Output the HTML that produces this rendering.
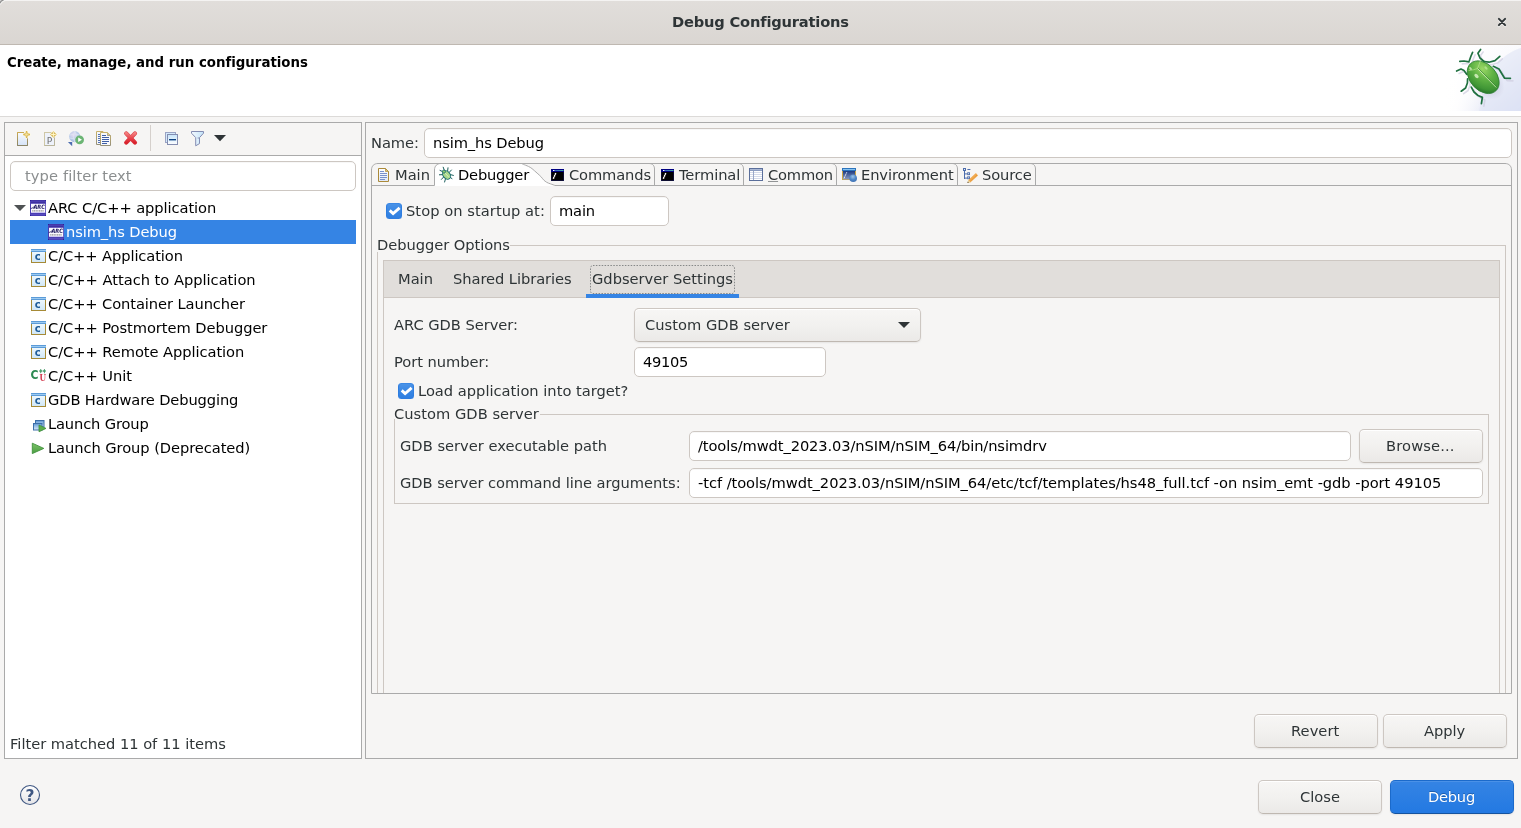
<!DOCTYPE html>
<html>
<head>
<meta charset="utf-8">
<title>Debug Configurations</title>
<style>
html,body{margin:0;padding:0}
body{width:1521px;height:828px;position:relative;overflow:hidden;background:#f6f5f4;
 font-family:"DejaVu Sans","Liberation Sans",sans-serif;font-size:14.67px;color:#2e3436;line-height:17px}
#root{position:absolute;left:0;top:0;width:1521px;height:828px;will-change:transform}
.a{position:absolute;white-space:nowrap}
.t{position:absolute;white-space:nowrap;line-height:17px;height:17px}
#titlebar{left:0;top:0;width:1521px;height:44px;border-bottom:1px solid #bfb8b1;
 background:linear-gradient(to bottom,#e1dedb 0%,#dad6d2 100%);box-shadow:inset 0 1px #f4f3f2}
#banner{left:0;top:45px;width:1521px;height:71px;background:#fff;border-bottom:1px solid #dcdad8}
.panel{position:absolute;border:1px solid #aaaaaa;box-sizing:border-box}
.entry{position:absolute;box-sizing:border-box;background:#fff;border:1px solid #cdc7c2;border-radius:5px;
 box-shadow:inset 0 1px rgba(0,0,0,0.03)}
.btn{position:absolute;box-sizing:border-box;border:1px solid #cdc7c2;border-bottom-color:#bfb8b1;border-radius:5px;
 background:linear-gradient(to bottom,#f7f6f5 0%,#f2f1ef 50%,#ebe9e7 100%);
 box-shadow:0 1px 2px rgba(0,0,0,0.07),inset 0 1px #fff}
.btn.blue{border-color:#1b6acb;border-bottom-color:#15539e;background:linear-gradient(to bottom,#3584e4,#2379e2);
 box-shadow:0 1px 2px rgba(0,0,0,0.07),inset 0 1px #4a91e7}
.row{position:absolute;left:10px;width:346px;height:24px}
.chk{position:absolute;width:16px;height:16px;box-sizing:border-box;border-radius:3.5px;
 background:linear-gradient(to bottom,#4b93e7 0%,#3886e4 55%,#2f7fe1 100%);border:1px solid #2e7de0;border-top-color:#3b88e5}
.grp{position:absolute;box-sizing:border-box;border:1px solid #cdc7c2}
.ic{position:absolute}
</style>
</head>
<body>
<div id="root">
<div class="a" id="titlebar"></div>
<svg class="ic" style="left:0;top:0" width="6" height="6" viewBox="0 0 6 6"><path d="M0 0 L4 0 L0 4 Z" fill="#d9d9d9"/><path d="M0 3.2 Q0.6 0.6 3.6 0" stroke="#8e8e8e" stroke-width="1.1" fill="none"/><path d="M0.4 4.6 Q1.4 1.6 4.8 0.8" stroke="#f3f2f1" stroke-width="0.9" fill="none"/></svg>
<div class="t" style="left:672px;top:13px;color:#2e3436;letter-spacing:-0.186px;font-weight:bold;">Debug Configurations</div>
<svg class="ic" style="left:1496px;top:16px" width="12" height="12" viewBox="0 0 12 12"><path d="M2.7 3.7 L9.3 10.3 M9.3 3.7 L2.7 10.3" stroke="#f1efee" stroke-width="2" fill="none" stroke-linecap="round"/><path d="M2.9 2.9 L9.1 9.1 M9.1 2.9 L2.9 9.1" stroke="#2e3436" stroke-width="2" fill="none" stroke-linecap="round"/></svg>
<div class="a" id="banner"></div>
<div class="t" style="left:7px;top:54px;color:#000;letter-spacing:-0.004px;font-weight:bold;font-size:13.33px;">Create, manage, and run configurations</div>
<svg class="ic" style="left:1446px;top:45px" width="75" height="66" viewBox="0 0 75 66">
<defs>
<linearGradient id="bb" x1="0.2" y1="0.15" x2="1" y2="1"><stop offset="0" stop-color="#ffffff"/><stop offset="0.4" stop-color="#fafafd"/><stop offset="0.72" stop-color="#e7eaf7"/><stop offset="1" stop-color="#d8ddf3"/></linearGradient><linearGradient id="bw" x1="0" y1="0" x2="1" y2="0"><stop offset="0" stop-color="#fff" stop-opacity="1"/><stop offset="0.12" stop-color="#fff" stop-opacity="0.9"/><stop offset="0.5" stop-color="#fff" stop-opacity="0"/></linearGradient>
<radialGradient id="bg2" cx="0.32" cy="0.3" r="0.75"><stop offset="0" stop-color="#9ad765"/><stop offset="0.45" stop-color="#5fb244"/><stop offset="0.85" stop-color="#3f9535"/><stop offset="1" stop-color="#2b7a2c"/></radialGradient>
<radialGradient id="bs" cx="0.5" cy="0.5" r="0.5"><stop offset="0" stop-color="#8a86a8" stop-opacity="0.45"/><stop offset="1" stop-color="#8a86a8" stop-opacity="0"/></radialGradient>
</defs>
<rect x="0" y="0" width="75" height="66" fill="url(#bb)"/>
<path d="M75 3 C54 9 38 30 33 66 L75 66 Z" fill="#dfe4f5" opacity="0.6"/><rect x="0" y="0" width="75" height="66" fill="url(#bw)"/>
<ellipse cx="40.2" cy="36.2" rx="21" ry="15" transform="rotate(45 40.2 36.2)" fill="url(#bs)"/>
<g fill="none" stroke="#cfcde0" stroke-width="1.6" stroke-linecap="round" stroke-linejoin="round" opacity="0.7" transform="translate(2.5 2.5)">
<path d="M23.4 15.5 L25.0 11.0 L26.6 7.3"/><path d="M23.0 16.8 L18.0 16.0 L13.8 16.4"/><path d="M38.0 16.5 L34.0 13.0 L31.9 8.2 L34.6 4.5"/><path d="M38.0 16.5 L43.0 17.2 L49.0 15.6 L53.8 11.4"/><path d="M47.3 21.3 L53.0 24.0 L56.0 29.0 L58.6 33.2 L64.4 33.4"/><path d="M20.7 29.3 L18.0 25.5 L15.0 24.0 L10.6 26.0"/><path d="M21.6 33.9 L21.4 38.0 L19.6 43.0 L15.2 46.2"/><path d="M25.3 42.1 L28.0 47.0 L32.0 50.5 L36.4 52.4 L35.4 58.6"/>
</g>
<g fill="none" stroke="#1f7040" stroke-width="1.7" stroke-linecap="round" stroke-linejoin="round">
<path d="M23.4 15.5 L25.0 11.0 L26.6 7.3"/><path d="M23.0 16.8 L18.0 16.0 L13.8 16.4"/><path d="M38.0 16.5 L34.0 13.0 L31.9 8.2 L34.6 4.5"/><path d="M38.0 16.5 L43.0 17.2 L49.0 15.6 L53.8 11.4"/><path d="M47.3 21.3 L53.0 24.0 L56.0 29.0 L58.6 33.2 L64.4 33.4"/><path d="M20.7 29.3 L18.0 25.5 L15.0 24.0 L10.6 26.0"/><path d="M21.6 33.9 L21.4 38.0 L19.6 43.0 L15.2 46.2"/><path d="M25.3 42.1 L28.0 47.0 L32.0 50.5 L36.4 52.4 L35.4 58.6"/>
</g>
<ellipse cx="37.2" cy="32.2" rx="18.6" ry="13.2" transform="rotate(47 37.2 32.2)" fill="url(#bg2)" stroke="#2e7f33" stroke-width="0.8"/>
<path d="M22.6 25.5 Q28.0 25.0 31.5 23.5 Q33.5 19.0 34.5 15.2" fill="none" stroke="#b5e08f" stroke-width="0.8" opacity="0.9"/>
<path d="M31.6 23.6 L50.2 42.4" stroke="#d4efb8" stroke-width="0.9"/>
<path d="M32.2 23.2 L50.8 42.0" stroke="#2f7f30" stroke-width="0.6"/>
<ellipse cx="30.5" cy="31.0" rx="2.6" ry="1.6" transform="rotate(45 30.5 31.0)" fill="#e8f8d4" opacity="0.75"/>
<ellipse cx="24.5" cy="23.5" rx="1.6" ry="1" transform="rotate(45 24.5 23.5)" fill="#e8f8d4" opacity="0.7"/>
<ellipse cx="40.0" cy="23.0" rx="2" ry="1.1" transform="rotate(45 40.0 23.0)" fill="#c9ecab" opacity="0.6"/>
</svg>
<div class="panel" style="left:4px;top:122px;width:358px;height:637px;background:#fff"></div>
<div class="a" style="left:5px;top:123px;width:356px;height:32px;background:#f6f5f4;border-bottom:1px solid #aaaaaa"></div>
<div class="a" style="left:150px;top:125px;width:1px;height:26px;background:#d5d0cc"></div>
<div class="entry" style="left:10px;top:161px;width:346px;height:30px"></div>
<div class="t" style="left:25px;top:167px;color:#8b8e8f;letter-spacing:0.099px;">type filter text</div>
<div class="row" style="top:220px;background:#3584e4"></div>
<div class="t" style="left:48px;top:199px;color:#000;letter-spacing:-0.081px;">ARC C/C++ application</div>
<div class="t" style="left:66px;top:223px;color:#fff;letter-spacing:-0.113px;">nsim_hs Debug</div>
<div class="t" style="left:48px;top:247px;color:#000;letter-spacing:-0.095px;">C/C++ Application</div>
<div class="t" style="left:48px;top:271px;color:#000;letter-spacing:-0.020px;">C/C++ Attach to Application</div>
<div class="t" style="left:48px;top:295px;color:#000;letter-spacing:-0.090px;">C/C++ Container Launcher</div>
<div class="t" style="left:48px;top:319px;color:#000;letter-spacing:-0.059px;">C/C++ Postmortem Debugger</div>
<div class="t" style="left:48px;top:343px;color:#000;letter-spacing:-0.063px;">C/C++ Remote Application</div>
<div class="t" style="left:48px;top:367px;color:#000;letter-spacing:-0.052px;">C/C++ Unit</div>
<div class="t" style="left:48px;top:391px;color:#000;letter-spacing:-0.121px;">GDB Hardware Debugging</div>
<div class="t" style="left:48px;top:415px;color:#000;letter-spacing:-0.145px;">Launch Group</div>
<div class="t" style="left:48px;top:439px;color:#000;letter-spacing:-0.067px;">Launch Group (Deprecated)</div>
<div class="t" style="left:10px;top:735px;color:#2e3436;letter-spacing:-0.023px;">Filter matched 11 of 11 items</div>
<div class="panel" style="left:365px;top:122px;width:1153px;height:637px"></div>
<div class="t" style="left:371px;top:134px;color:#2e3436;letter-spacing:-0.042px;">Name:</div>
<div class="entry" style="left:424px;top:128px;width:1088px;height:30px"></div>
<div class="t" style="left:433px;top:134px;color:#000;letter-spacing:-0.113px;">nsim_hs Debug</div>
<svg class="ic" style="left:371px;top:163px" width="1141" height="531" viewBox="0 0 1141 531">
<path d="M63.5 23 L63.5 7 C63.5 3 66 0.5 70 0.5 L150.5 0.5 C151.2 0.8 153.3 1.7 154.5 2.2 C155.7 2.7 156.5 2.9 157.6 3.5 C158.7 4.1 159.6 4.5 161.0 5.6 C162.4 6.7 164.6 8.8 166.1 10.1 C167.6 11.4 168.8 12.5 169.9 13.6 C171.0 14.7 171.6 15.9 172.6 16.9 C173.6 17.8 174.5 18.6 175.7 19.3 C176.9 20.0 178.2 20.4 179.6 20.9 C181.0 21.4 183.3 22.2 184.0 22.5 L184 23 Z" fill="#fff"/>
<path d="M0.5 530.5 L0.5 7 C0.5 3 3 0.5 7 0.5 L1134 0.5 C1138 0.5 1140.5 3 1140.5 7 L1140.5 530.5 Z" fill="none" stroke="#aaaaaa"/>
<path d="M0.5 22.5 L63.5 22.5 M184 22.5 L1140.5 22.5" fill="none" stroke="#aaaaaa"/>
<path d="M63.5 22.5 L63.5 7 C63.5 3 66 0.5 70 0.5 M150.5 0.5 C151.2 0.8 153.3 1.7 154.5 2.2 C155.7 2.7 156.5 2.9 157.6 3.5 C158.7 4.1 159.6 4.5 161.0 5.6 C162.4 6.7 164.6 8.8 166.1 10.1 C167.6 11.4 168.8 12.5 169.9 13.6 C171.0 14.7 171.6 15.9 172.6 16.9 C173.6 17.8 174.5 18.6 175.7 19.3 C176.9 20.0 178.2 20.4 179.6 20.9 C181.0 21.4 183.3 22.2 184.0 22.5" fill="none" stroke="#aaaaaa"/>
<g fill="none" stroke="#aaaaaa">
<path d="M283.5 22.5 L283.5 6 C283.5 3 282 0.5 278 0.5"/>
<path d="M372.5 22.5 L372.5 6 C372.5 3 371 0.5 367 0.5"/>
<path d="M465.5 22.5 L465.5 6 C465.5 3 464 0.5 460 0.5"/>
<path d="M586.5 22.5 L586.5 6 C586.5 3 585 0.5 581 0.5"/>
<path d="M664.5 22.5 L664.5 6 C664.5 3 663 0.5 659 0.5"/>
</g>
</svg>
<div class="t" style="left:395px;top:166px;color:#2e3436;letter-spacing:-0.003px;">Main</div>
<div class="t" style="left:458px;top:166px;color:#000;letter-spacing:-0.199px;">Debugger</div>
<div class="t" style="left:569px;top:166px;color:#2e3436;letter-spacing:-0.128px;">Commands</div>
<div class="t" style="left:679px;top:166px;color:#2e3436;letter-spacing:-0.092px;">Terminal</div>
<div class="t" style="left:768px;top:166px;color:#2e3436;letter-spacing:-0.176px;"><u style="text-decoration-thickness:1px;text-underline-offset:1px;text-decoration-color:rgba(46,52,54,0.5)">C</u>ommon</div>
<div class="t" style="left:861px;top:166px;color:#2e3436;letter-spacing:-0.088px;">Environment</div>
<div class="t" style="left:982px;top:166px;color:#2e3436;letter-spacing:-0.116px;">Source</div>
<div class="chk" style="left:386px;top:203px"></div>
<div class="t" style="left:406px;top:202px;color:#2e3436;letter-spacing:0.050px;">Stop on startup at:</div>
<div class="entry" style="left:550px;top:196px;width:119px;height:30px"></div>
<div class="t" style="left:559px;top:202px;color:#000;letter-spacing:-0.161px;">main</div>
<div class="a" style="left:372px;top:186px;width:1139px;height:507px;overflow:hidden">
 <div class="a" style="left:5px;top:59px;width:1129px;height:520px;border:1px solid #cdc7c2;box-sizing:border-box"></div>
 <div class="a" style="left:5px;top:55px;width:133px;height:11px;background:#f6f5f4"></div>
 <div class="a" style="left:11px;top:74px;width:1117px;height:500px;border:1px solid #cdc7c2;box-sizing:border-box"></div>
 <div class="a" style="left:11px;top:74px;width:1117px;height:38px;border:1px solid #cdc7c2;box-sizing:border-box;background:#e1dedb"></div>
 <div class="a" style="left:214px;top:108px;width:153px;height:4px;background:#3584e4"></div>
 <svg class="ic" style="left:218px;top:79px" width="145" height="29" viewBox="0 0 145 29"><rect x="0.5" y="0.5" width="144" height="28" rx="2.5" fill="none" stroke="#4a4e50" stroke-opacity="0.6" stroke-width="1" stroke-dasharray="1.5 1.4"/></svg>
</div>
<div class="t" style="left:377px;top:236px;color:#2e3436;letter-spacing:-0.053px;">Debugger Options</div>
<div class="t" style="left:398px;top:270px;color:#2e3436;letter-spacing:-0.003px;">Main</div>
<div class="t" style="left:453px;top:270px;color:#2e3436;letter-spacing:-0.060px;">Shared Libraries</div>
<div class="t" style="left:592px;top:270px;color:#2e3436;letter-spacing:-0.013px;">Gdbserver Settings</div>
<div class="t" style="left:394px;top:316px;color:#2e3436;letter-spacing:-0.037px;">ARC GDB Server:</div>
<div class="btn" style="left:634px;top:308px;width:287px;height:34px"></div>
<div class="t" style="left:645px;top:316px;color:#2e3436;letter-spacing:0.020px;">Custom GDB server</div>
<svg class="ic" style="left:897px;top:321px" width="14" height="8" viewBox="0 0 14 8"><path d="M1 1 L13 1 L7 7 Z" fill="#2e3436"/></svg>
<div class="t" style="left:394px;top:353px;color:#2e3436;letter-spacing:-0.037px;">Port number:</div>
<div class="entry" style="left:634px;top:347px;width:192px;height:30px"></div>
<div class="t" style="left:643px;top:353px;color:#000;letter-spacing:-0.331px;">49105</div>
<div class="chk" style="left:398px;top:383px"></div>
<div class="t" style="left:418px;top:382px;color:#2e3436;letter-spacing:-0.002px;">Load application into target?</div>
<div class="grp" style="left:394px;top:414px;width:1095px;height:90px"></div>
<div class="a" style="left:394px;top:410px;width:146px;height:9px;background:#f6f5f4"></div>
<div class="t" style="left:394px;top:405px;color:#2e3436;letter-spacing:0.020px;">Custom GDB server</div>
<div class="t" style="left:400px;top:437px;color:#2e3436;letter-spacing:0.011px;">GDB server executable path</div>
<div class="entry" style="left:689px;top:431px;width:662px;height:30px"></div>
<div class="t" style="left:698px;top:437px;color:#000;letter-spacing:-0.104px;">/tools/mwdt_2023.03/nSIM/nSIM_64/bin/nsimdrv</div>
<div class="btn" style="left:1359px;top:429px;width:124px;height:34px"></div>
<div class="t" style="left:1386px;top:437px;color:#2e3436;letter-spacing:0.143px;">Browse...</div>
<div class="t" style="left:400px;top:474px;color:#2e3436;letter-spacing:-0.030px;">GDB server command line arguments:</div>
<div class="entry" style="left:689px;top:468px;width:794px;height:30px"></div>
<div class="t" style="left:698px;top:474px;color:#000;letter-spacing:-0.056px;">-tcf /tools/mwdt_2023.03/nSIM/nSIM_64/etc/tcf/templates/hs48_full.tcf -on nsim_emt -gdb -port 49105</div>
<div class="btn" style="left:1254px;top:714px;width:124px;height:34px"></div>
<div class="t" style="left:1291px;top:722px;color:#2e3436;letter-spacing:0.050px;">Revert</div>
<div class="btn" style="left:1383px;top:714px;width:124px;height:34px"></div>
<div class="t" style="left:1424px;top:722px;color:#2e3436;letter-spacing:-0.082px;">Apply</div>
<div class="btn" style="left:1258px;top:780px;width:124px;height:34px"></div>
<div class="t" style="left:1300px;top:788px;color:#2e3436;letter-spacing:0.009px;">Close</div>
<div class="btn blue" style="left:1390px;top:780px;width:124px;height:34px"></div>
<div class="t" style="left:1428px;top:788px;color:#fff;letter-spacing:-0.247px;text-shadow:0 -1px rgba(15,65,130,0.55);">Debug</div>
<svg class="ic" style="left:15px;top:130px" width="17" height="17" viewBox="0 0 17 17" ><defs><linearGradient id="n1" x1="0" y1="0" x2="0" y2="1"><stop offset="0" stop-color="#f6f9fe"/><stop offset="1" stop-color="#d7e4f7"/></linearGradient><linearGradient id="n2" x1="0" y1="0" x2="0" y2="1"><stop offset="0" stop-color="#c9a954"/><stop offset="1" stop-color="#8a8468"/></linearGradient></defs><path d="M2.5 2.5 L9 2.5 M12.5 7 L12.5 15.5 L2.5 15.5 L2.5 2.5" fill="none" stroke="url(#n2)"/><rect x="3" y="3" width="9" height="12" fill="url(#n1)"/><path d="M2.5 2.5 L9 2.5 M12.5 7 L12.5 15.5 L2.5 15.5 L2.5 2.5" fill="none" stroke="url(#n2)"/><path d="M11.6 1.9 L11.6 7.1 M9 4.5 L14.2 4.5" stroke="#fffbe6" stroke-width="3.2" stroke-linecap="round"/><path d="M11.6 2 L11.6 7 M9.1 4.5 L14.1 4.5" stroke="#d3ae45" stroke-width="1.8" stroke-linecap="round"/><path d="M11.6 2.6 L11.6 6.4 M9.7 4.5 L13.5 4.5" stroke="#f9ebab" stroke-width="0.7"/></svg>
<svg class="ic" style="left:42px;top:130px" width="17" height="17" viewBox="0 0 17 17" ><rect x="2.5" y="2.5" width="10" height="13" fill="#eef2fb" stroke="#cfc7a6"/><path d="M12.5 7 L12.5 15.5 L2.5 15.5" fill="none" stroke="#b9b59c"/><text x="7.6" y="14" text-anchor="middle" font-family="DejaVu Sans,Liberation Sans,sans-serif" font-size="9.1" fill="#6e6e6e">P</text><path d="M11.4 0.6 L15.3 4.5 L11.4 8.4 L7.5 4.5 Z" fill="#fffbe6"/><path d="M11.4 1.2 L14.7 4.5 L11.4 7.8 L8.1 4.5 Z" fill="#d8b95c"/><path d="M11.4 2.2 L11.4 6.8 M9.1 4.5 L13.7 4.5" stroke="#fff6c8" stroke-width="1"/></svg>
<svg class="ic" style="left:67px;top:130px" width="18" height="17" viewBox="0 0 18 17" ><defs><radialGradient id="g1" cx="0.4" cy="0.35" r="0.7"><stop offset="0" stop-color="#eadcf3"/><stop offset="0.55" stop-color="#bccde9"/><stop offset="1" stop-color="#9cb4dc"/></radialGradient></defs><circle cx="7.7" cy="6.6" r="5.6" fill="url(#g1)"/><path d="M3 5 Q7.7 3 12.5 5 M2.4 8 Q7.7 10 13 8 M7.7 1 Q5 6.6 7.7 12.2 M7.7 1 Q11 6.6 7.7 12.2" stroke="#dfe6f5" stroke-width="0.7" fill="none"/><path d="M0.9 12 L5.2 12 L5.2 16.2 Z" fill="#4d6db0"/><circle cx="12.6" cy="9.8" r="4.4" fill="#6bb574"/><path d="M11.2 7.6 L15 9.8 L11.2 12 Z" fill="#fff"/></svg>
<svg class="ic" style="left:95px;top:130px" width="18" height="17" viewBox="0 0 18 17" ><defs><linearGradient id="cp" x1="0" y1="0" x2="0" y2="1"><stop offset="0" stop-color="#c9b26a"/><stop offset="1" stop-color="#969079"/></linearGradient></defs><path d="M1.5 1.5 L8 1.5 L9.5 3 L9.5 14.5 L1.5 14.5 Z" fill="#f3f6fc" stroke="url(#cp)"/><path d="M3 4.5 L6 4.5 M3 6.5 L6 6.5 M3 8.5 L6 8.5 M3 10.5 L6 10.5 M3 12.5 L6 12.5" stroke="#5472b4" stroke-width="1"/><path d="M5.5 2.5 L12.5 2.5 L15.5 5.5 L15.5 15.5 L5.5 15.5 Z" fill="#f7f9fd" stroke="url(#cp)"/><path d="M12.5 2.5 L12.5 5.5 L15.5 5.5" fill="#d9c98c" stroke="url(#cp)" stroke-width="0.8"/><path d="M7 5.5 L11 5.5 M7 7.5 L14 7.5 M7 9.5 L14 9.5 M7 11.5 L14 11.5 M7 13.5 L12 13.5" stroke="#3f5fa6" stroke-width="1.1"/></svg>
<svg class="ic" style="left:122px;top:129px" width="18" height="18" viewBox="0 0 18 18" ><defs><linearGradient id="dx" x1="0" y1="0" x2="0" y2="1"><stop offset="0" stop-color="#f27d7d"/><stop offset="0.5" stop-color="#e8464e"/><stop offset="1" stop-color="#d9232e"/></linearGradient></defs><path d="M4.2 4.4 L13 13.6 M13 4.4 L4.2 13.6" stroke="#d93a42" stroke-width="4.2" stroke-linecap="round" fill="none"/><path d="M4.2 4.4 L13 13.6 M13 4.4 L4.2 13.6" stroke="url(#dx)" stroke-width="3.2" stroke-linecap="round" fill="none"/></svg>
<svg class="ic" style="left:164px;top:131px" width="15" height="15" viewBox="0 0 15 15" ><defs><linearGradient id="ca" x1="0" y1="0" x2="0" y2="1"><stop offset="0" stop-color="#c6e4fa"/><stop offset="1" stop-color="#fdfeff"/></linearGradient></defs><rect x="1.5" y="1.5" width="10" height="10" fill="#d3e9fb" stroke="#9aa3c4"/><rect x="3.5" y="3.5" width="10" height="10" fill="url(#ca)" stroke="#848db0"/><rect x="5" y="8" width="7" height="1.4" fill="#0d4384"/></svg>
<svg class="ic" style="left:190px;top:130px" width="16" height="17" viewBox="0 0 16 17" ><defs><linearGradient id="ff" x1="0" y1="0" x2="1" y2="0"><stop offset="0" stop-color="#f4faff"/><stop offset="1" stop-color="#c4e3f8"/></linearGradient></defs><path d="M1.5 1.5 L13.5 1.5 L13.5 3.2 L9.5 7.6 L9.5 13.6 L5.7 15.8 L5.7 7.6 L1.5 3.2 Z" fill="url(#ff)" stroke="#838cb2" stroke-width="1" stroke-linejoin="round"/><path d="M7.6 8 L9.4 8" stroke="#838cb2" stroke-width="0.9"/></svg>
<svg class="ic" style="left:213px;top:134px" width="14" height="9" viewBox="0 0 14 9" ><path d="M1 1 L13 1 L7 7.2 Z" fill="#2e3436"/></svg>
<svg class="ic" style="left:13px;top:204px" width="14" height="9" viewBox="0 0 14 9" ><path d="M1 1 L13 1 L7 7 Z" fill="#4f5254"/></svg>
<svg class="ic" style="left:30px;top:200px" width="16" height="16" viewBox="0 0 16 16" ><rect x="0" y="0" width="16" height="16" fill="#4a3db2"/><rect x="0" y="0" width="16" height="0.8" fill="#4134a6"/><rect x="1" y="2" width="14" height="1" fill="#3f319f"/><rect x="1" y="3.8" width="14.2" height="9" fill="#fbfaff"/><rect x="1" y="12.2" width="14.2" height="0.8" fill="#c9c2f2"/><rect x="1" y="14" width="14" height="0.9" fill="#5b4fc2"/><rect x="0" y="0" width="1" height="1" fill="#2b1e9a"/><rect x="15" y="0" width="1" height="1" fill="#2b1e9a"/><rect x="0" y="15" width="1" height="1" fill="#2b1e9a"/><rect x="15" y="15" width="1" height="1" fill="#2b1e9a"/><path d="M2.2 10.9 L13.8 10.9" stroke="#8d8d92" stroke-width="1.1" stroke-dasharray="1.2 0.5"/><path d="M0.8 8.6 Q3 8.2 5.2 5.6" stroke="#1d175e" stroke-width="0.8" fill="none"/><text x="9.2" y="9.4" text-anchor="middle" font-family="DejaVu Sans,Liberation Sans,sans-serif" font-weight="bold" font-style="italic" font-size="6" textLength="11.6" lengthAdjust="spacingAndGlyphs" fill="#1d175e">ARC</text></svg>
<svg class="ic" style="left:48px;top:224px" width="16" height="16" viewBox="0 0 16 16" ><rect x="0" y="0" width="16" height="16" fill="#4a3db2"/><rect x="0" y="0" width="16" height="0.8" fill="#4134a6"/><rect x="1" y="2" width="14" height="1" fill="#3f319f"/><rect x="1" y="3.8" width="14.2" height="9" fill="#fbfaff"/><rect x="1" y="12.2" width="14.2" height="0.8" fill="#c9c2f2"/><rect x="1" y="14" width="14" height="0.9" fill="#5b4fc2"/><rect x="0" y="0" width="1" height="1" fill="#2b1e9a"/><rect x="15" y="0" width="1" height="1" fill="#2b1e9a"/><rect x="0" y="15" width="1" height="1" fill="#2b1e9a"/><rect x="15" y="15" width="1" height="1" fill="#2b1e9a"/><path d="M2.2 10.9 L13.8 10.9" stroke="#8d8d92" stroke-width="1.1" stroke-dasharray="1.2 0.5"/><path d="M0.8 8.6 Q3 8.2 5.2 5.6" stroke="#1d175e" stroke-width="0.8" fill="none"/><text x="9.2" y="9.4" text-anchor="middle" font-family="DejaVu Sans,Liberation Sans,sans-serif" font-weight="bold" font-style="italic" font-size="6" textLength="11.6" lengthAdjust="spacingAndGlyphs" fill="#1d175e">ARC</text></svg>
<svg class="ic" style="left:30px;top:248px" width="17" height="16" viewBox="0 0 17 16" ><defs><linearGradient id="cg30_248" x1="0" y1="0" x2="0" y2="1"><stop offset="0" stop-color="#f4fbff"/><stop offset="1" stop-color="#cfe6f6"/></linearGradient></defs><rect x="1.5" y="1.5" width="14" height="13" fill="url(#cg30_248)" stroke="#a68a36"/><rect x="1" y="1" width="15" height="3" fill="#5b9bd8"/><rect x="1" y="2" width="15" height="1" fill="#9ccaf0"/><text x="7.8" y="11.5" text-anchor="middle" font-family="DejaVu Sans,Liberation Sans,sans-serif" font-weight="bold" font-size="10" fill="#1d5b98">c</text></svg>
<svg class="ic" style="left:30px;top:272px" width="17" height="16" viewBox="0 0 17 16" ><defs><linearGradient id="cg30_272" x1="0" y1="0" x2="0" y2="1"><stop offset="0" stop-color="#f4fbff"/><stop offset="1" stop-color="#cfe6f6"/></linearGradient></defs><rect x="1.5" y="1.5" width="14" height="13" fill="url(#cg30_272)" stroke="#a68a36"/><rect x="1" y="1" width="15" height="3" fill="#5b9bd8"/><rect x="1" y="2" width="15" height="1" fill="#9ccaf0"/><text x="7.8" y="11.5" text-anchor="middle" font-family="DejaVu Sans,Liberation Sans,sans-serif" font-weight="bold" font-size="10" fill="#1d5b98">c</text></svg>
<svg class="ic" style="left:30px;top:296px" width="17" height="16" viewBox="0 0 17 16" ><defs><linearGradient id="cg30_296" x1="0" y1="0" x2="0" y2="1"><stop offset="0" stop-color="#f4fbff"/><stop offset="1" stop-color="#cfe6f6"/></linearGradient></defs><rect x="1.5" y="1.5" width="14" height="13" fill="url(#cg30_296)" stroke="#a68a36"/><rect x="1" y="1" width="15" height="3" fill="#5b9bd8"/><rect x="1" y="2" width="15" height="1" fill="#9ccaf0"/><text x="7.8" y="11.5" text-anchor="middle" font-family="DejaVu Sans,Liberation Sans,sans-serif" font-weight="bold" font-size="10" fill="#1d5b98">c</text></svg>
<svg class="ic" style="left:30px;top:320px" width="17" height="16" viewBox="0 0 17 16" ><defs><linearGradient id="cg30_320" x1="0" y1="0" x2="0" y2="1"><stop offset="0" stop-color="#f4fbff"/><stop offset="1" stop-color="#cfe6f6"/></linearGradient></defs><rect x="1.5" y="1.5" width="14" height="13" fill="url(#cg30_320)" stroke="#a68a36"/><rect x="1" y="1" width="15" height="3" fill="#5b9bd8"/><rect x="1" y="2" width="15" height="1" fill="#9ccaf0"/><text x="7.8" y="11.5" text-anchor="middle" font-family="DejaVu Sans,Liberation Sans,sans-serif" font-weight="bold" font-size="10" fill="#1d5b98">c</text></svg>
<svg class="ic" style="left:30px;top:344px" width="17" height="16" viewBox="0 0 17 16" ><defs><linearGradient id="cg30_344" x1="0" y1="0" x2="0" y2="1"><stop offset="0" stop-color="#f4fbff"/><stop offset="1" stop-color="#cfe6f6"/></linearGradient></defs><rect x="1.5" y="1.5" width="14" height="13" fill="url(#cg30_344)" stroke="#a68a36"/><rect x="1" y="1" width="15" height="3" fill="#5b9bd8"/><rect x="1" y="2" width="15" height="1" fill="#9ccaf0"/><text x="7.8" y="11.5" text-anchor="middle" font-family="DejaVu Sans,Liberation Sans,sans-serif" font-weight="bold" font-size="10" fill="#1d5b98">c</text></svg>
<svg class="ic" style="left:30px;top:392px" width="17" height="16" viewBox="0 0 17 16" ><defs><linearGradient id="cg30_392" x1="0" y1="0" x2="0" y2="1"><stop offset="0" stop-color="#f4fbff"/><stop offset="1" stop-color="#cfe6f6"/></linearGradient></defs><rect x="1.5" y="1.5" width="14" height="13" fill="url(#cg30_392)" stroke="#a68a36"/><rect x="1" y="1" width="15" height="3" fill="#5b9bd8"/><rect x="1" y="2" width="15" height="1" fill="#9ccaf0"/><text x="7.8" y="11.5" text-anchor="middle" font-family="DejaVu Sans,Liberation Sans,sans-serif" font-weight="bold" font-size="10" fill="#1d5b98">c</text></svg>
<svg class="ic" style="left:30px;top:367px" width="17" height="16" viewBox="0 0 17 16" ><text x="0.4" y="11.6" font-family="DejaVu Sans,Liberation Sans,sans-serif" font-weight="bold" font-size="13" textLength="8" lengthAdjust="spacingAndGlyphs" fill="#2c8a52">C</text><text x="9" y="6.3" font-family="DejaVu Sans,Liberation Sans,sans-serif" font-weight="bold" font-size="6" textLength="7.2" lengthAdjust="spacingAndGlyphs" fill="#2c8a52" stroke="#2c8a52" stroke-width="0.3">++</text><text x="9.4" y="13.7" font-family="DejaVu Serif,Liberation Serif,serif" font-weight="bold" font-size="8.3" textLength="6.6" lengthAdjust="spacingAndGlyphs" fill="#d2364a">U</text></svg>
<svg class="ic" style="left:32px;top:419px" width="16" height="14" viewBox="0 0 16 14" ><defs><linearGradient id="lg" x1="0" y1="0" x2="0" y2="1"><stop offset="0" stop-color="#5a92cf"/><stop offset="0.35" stop-color="#8fb9e4"/><stop offset="1" stop-color="#dcebf9"/></linearGradient></defs><rect x="3.5" y="1.5" width="8.5" height="6.5" fill="url(#lg)" stroke="#3c6ea8"/><rect x="1.5" y="4.5" width="8.5" height="6.5" fill="url(#lg)" stroke="#3c6ea8"/><path d="M7 6 L14 9.4 L7 12.8 Z" fill="#5cae4c" stroke="#3d8f3a" stroke-width="0.8" stroke-linejoin="round"/></svg>
<svg class="ic" style="left:31px;top:442px" width="15" height="13" viewBox="0 0 15 13" ><defs><linearGradient id="ld" x1="0" y1="0" x2="0" y2="1"><stop offset="0" stop-color="#7cc267"/><stop offset="1" stop-color="#4a9e42"/></linearGradient></defs><path d="M1.3 1.2 L12.8 6.4 L1.3 11.6 Z" fill="url(#ld)" stroke="#3f913b" stroke-width="0.9" stroke-linejoin="round"/></svg>
<svg class="ic" style="left:377px;top:167px" width="13" height="16" viewBox="0 0 13 16" ><defs><linearGradient id="mp" x1="0" y1="0" x2="0" y2="1"><stop offset="0" stop-color="#ffffff"/><stop offset="1" stop-color="#dfe8f8"/></linearGradient></defs><path d="M1.5 1.5 L8.5 1.5 L11.5 4.5 L11.5 14.5 L1.5 14.5 Z" fill="url(#mp)" stroke="#ab8a3a"/><path d="M8.5 1.5 L8.5 4.5 L11.5 4.5 Z" fill="#e2c577" stroke="#ab8a3a" stroke-width="0.7"/><path d="M3 4.5 L7 4.5 M3 6.5 L10 6.5 M3 8.5 L10 8.5 M3 10.5 L10 10.5 M3 12.5 L8 12.5" stroke="#6c86c4" stroke-width="0.9"/></svg>
<svg class="ic" style="left:438px;top:166px" width="17" height="17" viewBox="0 0 17 17" ><g stroke="#1c5f5c" stroke-width="1" fill="none" stroke-linecap="round"><path d="M5.2 1.2 L6.6 5 M2 4.4 L5.6 6 M1.4 8.8 L5 8.6 M3.4 13.4 L5.8 10.8 M6.6 16 L7.6 12.4 M10 1.8 L9.6 5 M13.4 4 L11.4 6.2 M15.4 9.4 L12.4 8.6 M14 12.6 L11.6 11"/></g><ellipse cx="8.6" cy="9" rx="3.5" ry="4.7" transform="rotate(-38 8.6 9)" fill="#a9d88a" stroke="#1d6d72" stroke-width="1"/><path d="M6.6 6.6 L11 11.4" stroke="#e8f6d8" stroke-width="0.7"/><circle cx="5.9" cy="5.6" r="1.6" fill="#8cc86c" stroke="#1d6d72" stroke-width="0.8"/></svg>
<svg class="ic" style="left:551px;top:169px" width="13" height="12" viewBox="0 0 13 12" ><defs><linearGradient id="kg551" x1="0" y1="0" x2="1" y2="0"><stop offset="0" stop-color="#2c50c8"/><stop offset="1" stop-color="#4ab4a4"/></linearGradient></defs><rect x="0" y="0" width="13" height="12" fill="#000"/><rect x="0" y="0" width="13" height="3" fill="#000080"/><rect x="3" y="1" width="9.5" height="1" fill="url(#kg551)"/><rect x="2" y="1" width="1.4" height="1" fill="#fff"/><rect x="0" y="3" width="0.5" height="9" fill="#1a1a60"/><rect x="12.5" y="3" width="0.5" height="9" fill="#1a1a60"/><rect x="0" y="11.5" width="13" height="0.5" fill="#1a1a60"/><path d="M2.3 9.7 L4.9 3.9" stroke="#fff" stroke-width="1.5" stroke-dasharray="1.7 0.5" fill="none"/></svg>
<svg class="ic" style="left:661px;top:169px" width="13" height="12" viewBox="0 0 13 12" ><defs><linearGradient id="kg661" x1="0" y1="0" x2="1" y2="0"><stop offset="0" stop-color="#2c50c8"/><stop offset="1" stop-color="#4ab4a4"/></linearGradient></defs><rect x="0" y="0" width="13" height="12" fill="#000"/><rect x="0" y="0" width="13" height="3" fill="#000080"/><rect x="3" y="1" width="9.5" height="1" fill="url(#kg661)"/><rect x="2" y="1" width="1.4" height="1" fill="#fff"/><rect x="0" y="3" width="0.5" height="9" fill="#1a1a60"/><rect x="12.5" y="3" width="0.5" height="9" fill="#1a1a60"/><rect x="0" y="11.5" width="13" height="0.5" fill="#1a1a60"/><path d="M2.3 9.7 L4.9 3.9" stroke="#fff" stroke-width="1.5" stroke-dasharray="1.7 0.5" fill="none"/></svg>
<svg class="ic" style="left:749px;top:168px" width="14" height="13" viewBox="0 0 14 13" ><rect x="0.5" y="0.5" width="13" height="12" fill="#fff" stroke="#5b6f9b"/><rect x="1" y="1" width="12" height="2" fill="#8a9bc0"/><rect x="1" y="1" width="12" height="1" fill="#a9b7d4"/><path d="M1 4.5 L13 4.5 M1 6.5 L13 6.5 M1 8.5 L13 8.5 M1 10.5 L13 10.5" stroke="#d4daea" stroke-width="1"/><path d="M4.5 3 L4.5 12" stroke="#9aa8c8" stroke-width="1"/></svg>
<svg class="ic" style="left:842px;top:168px" width="16" height="15" viewBox="0 0 16 15" ><defs><linearGradient id="ev" x1="0" y1="0" x2="0" y2="1"><stop offset="0" stop-color="#1c3a82"/><stop offset="1" stop-color="#8a9abf"/></linearGradient><radialGradient id="eb" cx="0.45" cy="0.3" r="0.8"><stop offset="0" stop-color="#9cc4ea"/><stop offset="0.5" stop-color="#4f86c6"/><stop offset="1" stop-color="#3a6cae"/></radialGradient></defs><rect x="0" y="0" width="14" height="12" fill="#c9a545"/><rect x="1" y="3" width="12" height="8.4" fill="url(#ev)"/><rect x="0" y="0" width="14" height="3" fill="#2d74bc"/><rect x="1" y="1" width="12" height="1" fill="#86c2f0"/><path d="M2 10.4 L4.8 4.2" stroke="#fff" stroke-width="1" stroke-dasharray="1.4 0.6" fill="none"/><circle cx="11.2" cy="10.2" r="3.8" fill="url(#eb)"/></svg>
<svg class="ic" style="left:962px;top:167px" width="18" height="17" viewBox="0 0 18 17" ><g fill="#4c6cab"><rect x="1" y="1" width="3" height="3"/><rect x="5.4" y="2" width="3" height="1"/><rect x="2" y="4" width="1" height="8"/><rect x="2" y="6.4" width="3.4" height="1"/><rect x="2" y="10.6" width="3.4" height="1"/><rect x="5.2" y="5.3" width="2.8" height="2.8"/><rect x="5.2" y="9.4" width="2.8" height="2.8"/></g><g fill="#e8eef8"><rect x="2" y="2" width="1" height="1"/><rect x="6.1" y="6.2" width="1" height="1"/><rect x="6.1" y="10.3" width="1" height="1"/></g><path d="M7.2 14.4 L15 7.2" stroke="#f1a94e" stroke-width="3.2" fill="none"/><path d="M7.6 14.9 L15.4 7.7" stroke="#d98a2c" stroke-width="0.8" fill="none" stroke-dasharray="1 0.8"/><path d="M5.6 15.8 L8.6 15.2 L6.2 12.8 Z" fill="#e6d29a"/><path d="M5.4 16 L6.9 15.7 L5.8 14.6 Z" fill="#5a3a1c"/></svg>
<svg class="ic" style="left:386px;top:203px" width="16" height="16" viewBox="0 0 16 16" ><path d="M3.7 7.4 L7.1 10.5 L13.6 4.9" stroke="#fff" stroke-width="2.9" fill="none" stroke-linejoin="miter"/></svg>
<svg class="ic" style="left:398px;top:383px" width="16" height="16" viewBox="0 0 16 16" ><path d="M3.7 7.4 L7.1 10.5 L13.6 4.9" stroke="#fff" stroke-width="2.9" fill="none" stroke-linejoin="miter"/></svg>
<svg class="ic" style="left:19px;top:784px" width="22" height="22" viewBox="0 0 22 22" ><defs><linearGradient id="hg" x1="0" y1="0" x2="0" y2="1"><stop offset="0" stop-color="#ffffff"/><stop offset="1" stop-color="#e4e4e7"/></linearGradient></defs><circle cx="11" cy="11" r="9.5" fill="url(#hg)" stroke="#3f5782" stroke-width="1.1"/><text x="11" y="16.6" text-anchor="middle" font-family="DejaVu Sans,Liberation Sans,sans-serif" font-weight="bold" font-size="15.5" fill="#3f5782">?</text></svg>
</div>
</body>
</html>
